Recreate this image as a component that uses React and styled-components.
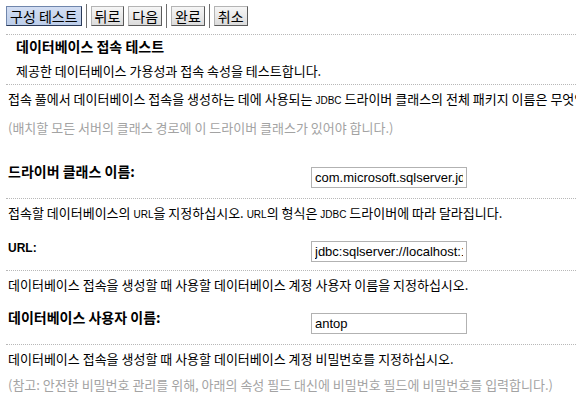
import React from "react";
import styled, { createGlobalStyle } from "styled-components";

const GlobalStyle = createGlobalStyle`
  body {
    margin: 0;
    background: #fff;
    font-family: "Noto Sans CJK KR", "Liberation Sans", sans-serif;
    color: #000;
  }
`;

const Page = styled.div`
  width: 576px;
  height: 401px;
  overflow: hidden;
  white-space: nowrap;
  font-size: 13px;
`;

const Toolbar = styled.div`
  display: flex;
  align-items: center;
  gap: 4px;
  padding: 4px 0 0 6px;
  height: 24px;
`;

const Button = styled.button`
  font-family: "Noto Sans CJK KR", sans-serif;
  font-size: 14px;
  line-height: 18px;
  height: 20px;
  padding: 0 3px;
  margin: 0;
  color: #000;
  border: 1px solid ${(p) => (p.active ? "#7086ac" : "#b4b4b4")};
  border-right-color: ${(p) => (p.active ? "#2a3a58" : "#5a5a5a")};
  border-bottom-color: ${(p) => (p.active ? "#2a3a58" : "#5a5a5a")};
  background: ${(p) =>
    p.active
      ? "linear-gradient(#d3def3, #bccde9)"
      : "linear-gradient(#f6f6f6, #dcdcdc)"};
`;

const Separator = styled.span`
  width: 1px;
  height: 24px;
  background: #6e6e6e;
`;

const Section = styled.div`
  border-top: 1px dotted #b8b8b8;
  margin-left: 6px;
  padding: ${(p) => p.pad || "5px 0 0 2px"};
  margin-top: ${(p) => p.top || 0}px;
`;

const Title = styled.div`
  font-size: 14px;
  font-weight: bold;
  line-height: 18px;
`;

const Text = styled.div`
  line-height: 18px;
  margin-top: ${(p) => p.gap || 0}px;
  color: ${(p) => (p.muted ? "#a3a3a3" : "#000")};
`;

const Abbr = styled.span`
  font-family: "Liberation Sans", sans-serif;
  font-size: 10px;
`;

const Field = styled.div`
  display: grid;
  grid-template-columns: 303px 156px;
  align-items: start;
  margin-top: ${(p) => p.gap}px;
  padding-bottom: ${(p) => p.bottom}px;
`;

const Label = styled.div`
  font-size: ${(p) => (p.small ? "12px" : "14px")};
  font-family: ${(p) =>
    p.small ? '"Liberation Sans", sans-serif' : '"Noto Sans CJK KR", sans-serif'};
  font-weight: bold;
  line-height: 18px;
  padding-top: ${(p) => (p.small ? 3 : 0)}px;
`;

const Input = styled.input`
  box-sizing: border-box;
  width: 156px;
  height: 21px;
  margin: 5px 0 0 0;
  padding: 0 3px;
  border: 1px solid #b2b2b2;
  font-family: "Liberation Sans", sans-serif;
  font-size: 13px;
  color: #000;
  background: #fff;
`;

const App = () => {
  return (
    <Page>
      <GlobalStyle />
      <Toolbar>
        <Button active>구성 테스트</Button>
        <Separator />
        <Button>뒤로</Button>
        <Button>다음</Button>
        <Separator />
        <Button>완료</Button>
        <Separator />
        <Button>취소</Button>
      </Toolbar>

      <Section top={6} pad="2px 0 4px 10px">
        <Title>데이터베이스 접속 테스트</Title>
        <Text gap={7}>제공한 데이터베이스 가용성과 접속 속성을 테스트합니다.</Text>
      </Section>

      <Section>
        <Text>
          접속 풀에서 데이터베이스 접속을 생성하는 데에 사용되는 <Abbr>JDBC</Abbr> 드라이버
          클래스의 전체 패키지 이름은 무엇입니까?
        </Text>
        <Text gap={9} muted>
          (배치할 모든 서버의 클래스 경로에 이 드라이버 클래스가 있어야 합니다.)
        </Text>
        <Field gap={25} bottom={10}>
          <Label>드라이버 클래스 이름:</Label>
          <Input defaultValue="com.microsoft.sqlserver.jdbc.SQLServerDriver" />
        </Field>
      </Section>

      <Section>
        <Text>
          접속할 데이터베이스의 <Abbr>URL</Abbr>을 지정하십시오. <Abbr>URL</Abbr>의 형식은{" "}
          <Abbr>JDBC</Abbr> 드라이버에 따라 달라집니다.
        </Text>
        <Field gap={12} bottom={8}>
          <Label small>URL:</Label>
          <Input defaultValue="jdbc:sqlserver://localhost:1433" />
        </Field>
      </Section>

      <Section>
        <Text>데이터베이스 접속을 생성할 때 사용할 데이터베이스 계정 사용자 이름을 지정하십시오.</Text>
        <Field gap={14} bottom={10}>
          <Label>데이터베이스 사용자 이름:</Label>
          <Input defaultValue="antop" />
        </Field>
      </Section>

      <Section>
        <Text>데이터베이스 접속을 생성할 때 사용할 데이터베이스 계정 비밀번호를 지정하십시오.</Text>
        <Text gap={8} muted>
          (참고: 안전한 비밀번호 관리를 위해, 아래의 속성 필드 대신에 비밀번호 필드에 비밀번호를
          입력합니다.)
        </Text>
      </Section>
    </Page>
  );
};

export default App;
